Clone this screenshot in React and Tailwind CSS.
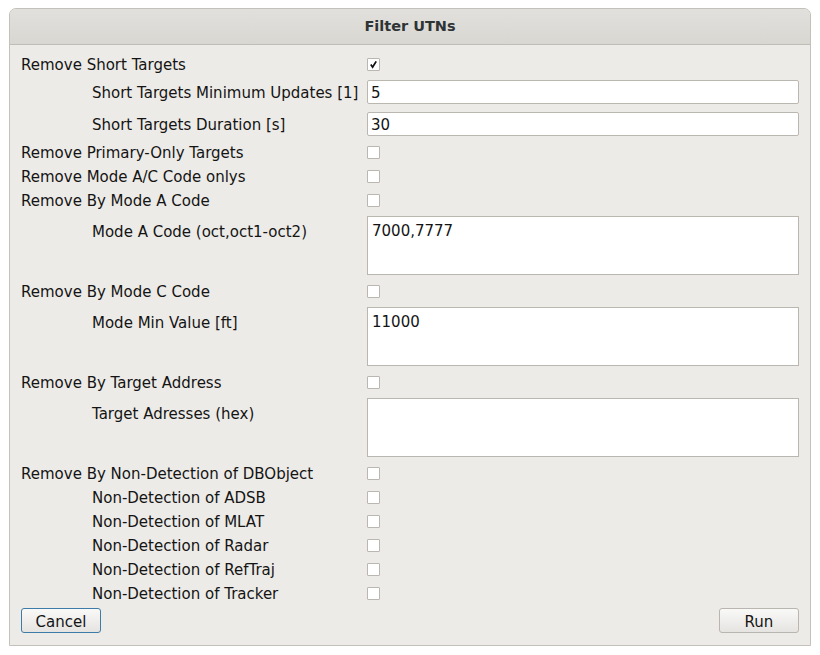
import React from "react";

const font = { fontFamily: '"DejaVu Sans", "Noto Sans", sans-serif' };

function CheckBox({ checked }) {
  return (
    <span className="flex h-[13px] w-[13px] items-center justify-center rounded-[1px] border border-[#bab6b0] bg-white">
      {checked && (
        <svg width="9" height="9" viewBox="0 0 9 9">
          <path d="M1.8 4.6 L3.6 7.2 L7.2 1.4" fill="none" stroke="#111" strokeWidth="1.8" />
        </svg>
      )}
    </span>
  );
}

function CheckRow({ label, indent, checked }) {
  return (
    <div className="flex h-4 items-center">
      <div className={`w-[346px] shrink-0 pt-[2px] ${indent ? "pl-[71px]" : ""}`}>{label}</div>
      <CheckBox checked={checked} />
    </div>
  );
}

function InputRow({ label, value }) {
  return (
    <div className="flex h-6 items-center">
      <div className="w-[346px] shrink-0 pl-[71px] pt-[2px]">{label}</div>
      <div className="flex h-6 flex-1 items-center rounded-[2px] border border-[#bab6b0] bg-white pl-[3px] pt-[2px]">{value}</div>
    </div>
  );
}

function AreaRow({ label, value }) {
  return (
    <div className="flex h-[59px]">
      <div className="w-[346px] shrink-0 pl-[71px] pt-[8px]">{label}</div>
      <div className="h-[59px] flex-1 border border-[#bab6b0] bg-white pl-1 pt-[6px]">{value}</div>
    </div>
  );
}

export default function App() {
  return (
    <div className="h-[655px] w-[820px] bg-white pt-2" style={font}>
      <div className="ml-[9px] flex h-[638px] w-[802px] flex-col overflow-hidden rounded-t-[7px] border border-[#c4c1bb] bg-[#edebe7] text-[15px] leading-4 text-[#141414]">
        <div className="flex h-[36px] shrink-0 items-center justify-center border-b border-[#c0bdb7] bg-gradient-to-b from-[#e2e0dc] to-[#d9d7d2] pb-[2px] text-[14.5px] font-bold text-[#2e3436]">
          Filter UTNs
        </div>
        <div className="flex flex-col gap-2 pl-[11px] pr-[11px] pt-[11px]">
          <CheckRow label="Remove Short Targets" checked />
          <InputRow label="Short Targets Minimum Updates [1]" value="5" />
          <InputRow label="Short Targets Duration [s]" value="30" />
          <CheckRow label="Remove Primary-Only Targets" />
          <CheckRow label="Remove Mode A/C Code onlys" />
          <CheckRow label="Remove By Mode A Code" />
          <AreaRow label="Mode A Code (oct,oct1-oct2)" value="7000,7777" />
          <CheckRow label="Remove By Mode C Code" />
          <AreaRow label="Mode Min Value [ft]" value="11000" />
          <CheckRow label="Remove By Target Address" />
          <AreaRow label="Target Adresses (hex)" value="" />
          <CheckRow label="Remove By Non-Detection of DBObject" />
          <CheckRow label="Non-Detection of ADSB" indent />
          <CheckRow label="Non-Detection of MLAT" indent />
          <CheckRow label="Non-Detection of Radar" indent />
          <CheckRow label="Non-Detection of RefTraj" indent />
          <CheckRow label="Non-Detection of Tracker" indent />
          <div className="mt-[-1px] flex justify-between">
            <button className="h-[25px] w-[80px] rounded-[3px] border border-[#3d7ca8] bg-gradient-to-b from-[#f9f9f8] to-[#e6e4e1] pt-[2px]">
              Cancel
            </button>
            <button className="h-[25px] w-[80px] rounded-[3px] border border-[#b9b5af] bg-gradient-to-b from-[#f9f9f8] to-[#e6e4e1] pt-[2px]">
              Run
            </button>
          </div>
        </div>
      </div>
    </div>
  );
}
